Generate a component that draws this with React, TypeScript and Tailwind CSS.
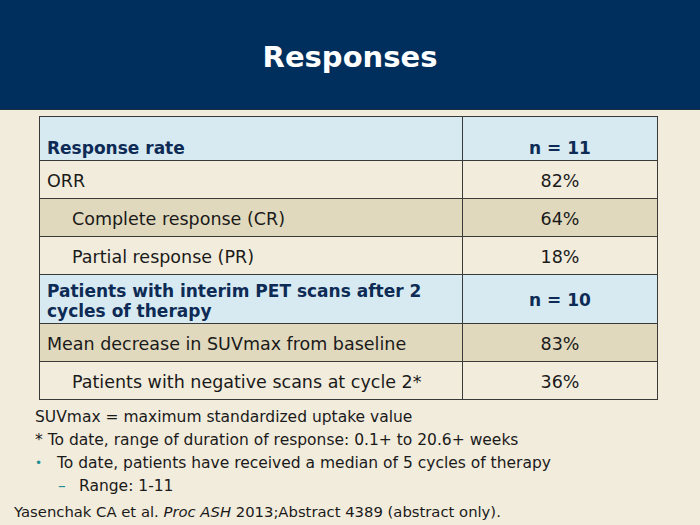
import React from "react";

const cell = "border border-[#3a3a3a] flex items-center";

export default function App() {
  const f = { fontFamily: '"DejaVu Sans", Verdana, sans-serif' };
  return (
    <div className="w-[700px] h-[525px] bg-[#f2ecdc] overflow-hidden relative" style={f}>
      <div className="h-[110px] bg-[#002e5d] border-b border-[#1d2e40] flex items-center justify-center">
        <h1 className="text-white font-bold text-[29px] mt-[7px]">Responses</h1>
      </div>
      <div className="ml-[39px] mt-[6px] w-[619px] text-[17.5px] text-[#1a1a1a]">
        <div className="grid grid-cols-[424px_195px]">
          <div className={`${cell} bg-[#d7eaf2] h-[45px] pl-[7px] pt-[20px] font-bold text-[17px] text-[#0d2b55]`}>Response rate</div>
          <div className={`${cell} -ml-px bg-[#d7eaf2] h-[45px] justify-center pt-[20px] font-bold text-[17px] text-[#0d2b55]`}>n = 11</div>
        </div>
        <Row a="ORR" b="82%" bg="bg-[#f2ecdc]" />
        <Row a="Complete response (CR)" b="64%" bg="bg-[#e1d9bd]" indent />
        <Row a="Partial response (PR)" b="18%" bg="bg-[#f2ecdc]" indent />
        <div className="grid grid-cols-[424px_195px] -mt-px">
          <div className={`${cell} bg-[#d7eaf2] h-[50px] pl-[7px] font-bold text-[17px] text-[#0d2b55] leading-[20px] pt-[3px]`}>
            Patients with interim PET scans after 2<br />cycles of therapy
          </div>
          <div className={`${cell} -ml-px bg-[#d7eaf2] h-[50px] justify-center pt-[4px] font-bold text-[17px] text-[#0d2b55]`}>n = 10</div>
        </div>
        <Row a="Mean decrease in SUVmax from baseline" b="83%" bg="bg-[#e1d9bd]" />
        <Row a="Patients with negative scans at cycle 2*" b="36%" bg="bg-[#f2ecdc]" indent />
      </div>
      <div className="text-[15.5px] text-[#1a1a1a] leading-[23px]">
        <div className="ml-[35px] mt-[6px]">SUVmax = maximum standardized uptake value</div>
        <div className="ml-[35px]">* To date, range of duration of response: 0.1+ to 20.6+ weeks</div>
        <div className="ml-[35px] flex">
          <span className="w-[22px] text-[#1f8f95] text-[12px]">•</span>
          <span>To date, patients have received a median of 5 cycles of therapy</span>
        </div>
        <div className="ml-[58px] flex">
          <span className="w-[21px] text-[#1f8f95]">–</span>
          <span>Range: 1-11</span>
        </div>
        <div className="ml-[14px] mt-[2px] text-[14.8px]">
          Yasenchak CA et al. <i>Proc ASH</i> 2013;Abstract 4389 (abstract only).
        </div>
      </div>
    </div>
  );
}

function Row({ a, b, bg, indent }: { a: string; b: string; bg: string; indent?: boolean }) {
  return (
    <div className="grid grid-cols-[424px_195px] -mt-px">
      <div className={`${cell} ${bg} h-[39px] pt-[4px] ${indent ? "pl-[32px]" : "pl-[7px]"}`}>{a}</div>
      <div className={`${cell} -ml-px ${bg} h-[39px] pt-[4px] justify-center`}>{b}</div>
    </div>
  );
}
